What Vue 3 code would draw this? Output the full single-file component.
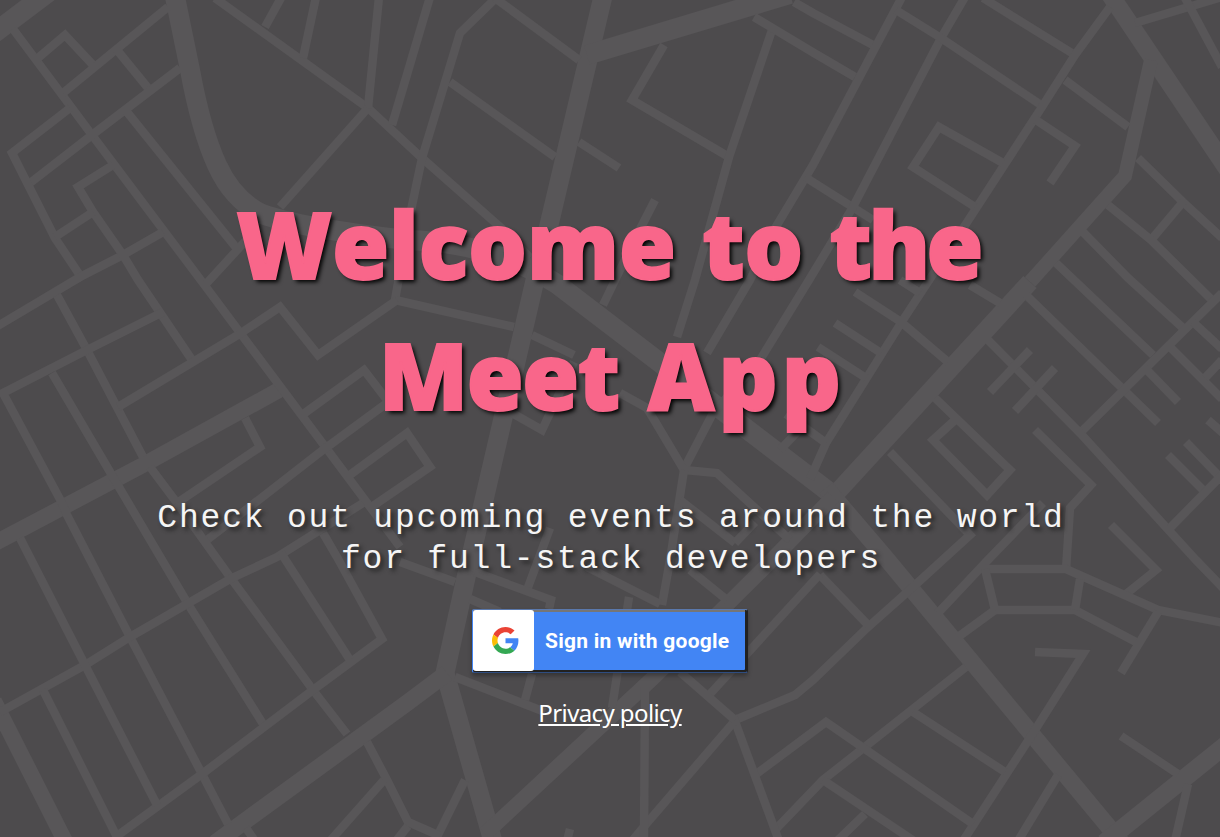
<script setup>
const highways = [
  { w: 20, d: 'M-15 40L50 -9' },
  { w: 20, d: 'M174 -8L190 70Q201 130 217 165Q233 200 262 214Q300 228 407 240Q490 242 557 284L833 495' },
  { w: 19, d: 'M604 -8L549 225L535 280L465 582L445 673L494 845' },
  { w: 20, d: 'M587 55L790 -6' },
  { w: 18, d: 'M1109 -7L1228 170' },
  { w: 14, d: 'M1151 60L1125 176L1030 282' },
  { w: 18, d: 'M1030 282L830 500' },
  { w: 17, d: 'M826 488L885 557L1122 843' },
  { w: 15, d: 'M833 497L765 567L654 677L485 834' },
  { w: 16, d: 'M-5 543L143 465L279 390' },
  { w: 16, d: 'M-6 701L68 847' },
  { w: 17, d: 'M215 843L407 703L447 673' },
  { w: 18, d: 'M1104 843L1228 743' },
]

const streets = [
  '13,29 92,135 203,283 400,547', '38,58 65,35 93,65', '168,7 63,93', '117,50 148,88',
  '180,68 92,135 30,183', '70,108 12,153 55,238 83,280', '163,232 123,255 80,277 -4,327',
  '113,165 78,187 93,212 123,255 138,280 192,360', '93,212 55,237', '127,112 238,250',
  '250,236 206,284', '215,-2 368,108 422,158 507,233 530,258', '281,-2 265,27', '316,-3 303,58',
  '379,-3 368,108', '430,-3 392,125', '368,108 280,207', '496,-2 460,33 422,158 410,215 395,300',
  '495,-2 579,60', '450,82 555,157', '579,142 619,168', '664,45 632,100 729,157',
  '772,30 729,157 695,280 677,337', '754,17 814,53 855,77', '794,2 813,13 873,45',
  '655,200 637,235 603,305', '902,-3 813,165 774,230 750,280 707,353', '805,177 873,220',
  '965,-3 941,38 853,207 809,280 760,360 713,413 685,467', '896,10 941,38 1041,105',
  '983,-2 1075,55', '1110,7 1075,55 1040,110 962,230 901,323 826,443 810,479',
  '1065,80 1128,127', '1003,163 939,127 913,167 975,207', '1036,120 1075,146 1050,183',
  '1135,23 1222,-3', '1184,-4 1222,67', '1138,158 1183,202 1222,238', '1183,202 1151,240',
  '1108,205 1151,240 1211,299', '1083,232 1128,278 1183,328', '1056,263 1153,355',
  '1026,295 1158,423', '1222,293 1080,433', '1193,322 1222,349', '1168,345 1222,399',
  '1222,360 1205,378', '1145,368 1178,402', '988,340 1080,433 1196,560 1224,589',
  '1030,350 990,392', '1055,368 1015,411', '970,285 1000,303', '855,292 901,322 948,362',
  '835,323 881,353', '818,347 866,378', '900,280 920,293', '786,414 826,443',
  '935,398 1010,470 987,495 933,440 955,420', '1035,430 1091,485 1070,508 1066,570',
  '890,452 970,535 913,587 868,627 813,680 795,695 735,720', '1043,503 986,562 938,613',
  '1111,525 1156,570 1126,594', '1208,420 1224,434', '1186,442 1218,475', '1168,455 1205,492',
  '1224,473 1170,528', '985,569 1066,569 1158,610 1224,623', '985,569 995,610 1075,610 1136,642',
  '958,637 995,610', '1080,579 1075,610', '1158,612 1121,673', '1035,652 1083,654 1035,730 963,841',
  '1121,736 1178,774', '1188,784 1175,841', '966,667 823,780 775,830', '913,712 1005,772',
  '755,775 826,722 973,824', '733,716 779,841', '733,723 647,823 632,841', '823,780 914,841',
  '865,814 837,841', '1058,775 1018,841', '820,575 868,625', '820,574 710,694',
  '395,300 514,327', '532,335 574,355', '512,413 542,430 574,362', '620,393 647,408 684,470 717,473 790,540',
  '684,470 670,560 662,605', '587,567 660,604', '629,597 612,708', '680,500 735,543',
  '690,570 727,600', '801,428 780,450', '735,543 755,522', '550,528 527,590', '475,572 551,600 549,609',
  '400,562 455,582', '470,599 500,612', '455,677 545,712', '532,674 525,700', '645,687 644,841',
  '680,672 735,720', '465,780 435,841', '367,742 387,780 408,822 440,836', '384,780 330,841',
  '408,826 396,841', '570,829 567,841', '246,828 255,841', '57,295 87,350 143,457',
  '150,467 177,503 260,447 245,418', '163,312 87,350 3,393 62,503 67,515 130,637 202,774 228,824',
  '52,373 113,477 188,604 263,724', '118,407 238,335 280,307 318,355 397,300', '302,415 364,370 390,404',
  '387,403 323,450 207,540', '177,503 230,577 313,690 347,734', '347,477 407,433 430,467 370,508',
  '363,503 277,557 230,579 130,637 85,665 0,712', '323,533 337,557 382,639 313,690 202,774 117,836',
  '281,553 350,660', '20,538 85,665 157,805', '43,690 119,841',
]
</script>

<template>
  <main class="welcome">
    <svg class="map" viewBox="0 0 1220 837" preserveAspectRatio="xMidYMid slice" aria-hidden="true">
      <path v-for="(h, i) in highways" :key="'h' + i" :d="h.d" :stroke-width="h.w" />
      <polyline v-for="(s, i) in streets" :key="'s' + i" :points="s" stroke-width="8.5" />
    </svg>
    <h1>Welcome to <span class="the">the</span><br /><span class="meet">Meet</span> <span class="app">App</span></h1>
    <h4>Check out upcoming events around the world<br />for full-stack developers</h4>
    <button class="google">
      <span class="logo">
        <svg viewBox="0 0 48 48" aria-hidden="true">
          <path fill="#EA4335" d="M24 9.5c3.54 0 6.71 1.22 9.21 3.6l6.85-6.85C35.9 2.38 30.47 0 24 0 14.62 0 6.51 5.38 2.56 13.22l7.98 6.19C12.43 13.72 17.74 9.5 24 9.5z" />
          <path fill="#4285F4" d="M46.98 24.55c0-1.57-.15-3.09-.38-4.55H24v9.02h12.94c-.58 2.96-2.26 5.48-4.78 7.18l7.73 6c4.51-4.18 7.09-10.36 7.09-17.65z" />
          <path fill="#FBBC05" d="M10.53 28.59c-.48-1.45-.76-2.99-.76-4.59s.27-3.14.76-4.59l-7.98-6.19C.92 16.46 0 20.12 0 24c0 3.88.92 7.54 2.56 10.78l7.97-6.19z" />
          <path fill="#34A853" d="M24 48c6.48 0 11.93-2.13 15.89-5.81l-7.73-6c-2.15 1.45-4.92 2.3-8.16 2.3-6.26 0-11.57-4.22-13.47-9.91l-7.98 6.19C6.51 42.62 14.62 48 24 48z" />
        </svg>
      </span>
      <span class="label">Sign in with google</span>
    </button>
    <a class="privacy" href="#">Privacy policy</a>
  </main>
</template>

<style>
body { margin: 0; background: #4d4b4d; }
</style>

<style scoped>
.welcome {
  position: relative;
  display: flex;
  flex-direction: column;
  align-items: center;
  height: 837px;
  overflow: hidden;
  background: #4d4b4d;
  color: #fff;
  text-align: center;
}
.map {
  position: absolute;
  inset: 0;
  width: 100%;
  height: 100%;
  fill: none;
  stroke: #585658;
}
h1, h4, .google, .privacy { position: relative; }
h1 {
  margin: 178px 0 0;
  font: 800 92px/131px "Open Sans", "Noto Sans", sans-serif;
  word-spacing: 2.5px;
  color: #f9668a;
  white-space: nowrap;
  -webkit-text-stroke: 2px #f9668a;
  text-shadow: 3px 3px 4px #000;
}
.the { letter-spacing: -3.5px; margin-right: 3.5px; }
.meet { letter-spacing: -1.3px; margin-right: 2.5px; }
.app { letter-spacing: 4px; margin-right: -4px; }
h4 {
  margin: 58px 0 0 2px;
  font: 400 33px/41px "Liberation Mono", monospace;
  letter-spacing: 1.8px;
  color: #f5f5f5;
  white-space: nowrap;
  text-shadow: 3px 3px 4px #222;
}
.google {
  display: flex;
  align-items: center;
  box-sizing: border-box;
  width: 276px;
  height: 64px;
  margin: 29px 0 0;
  padding: 0 0 1px;
  border: 1px solid;
  border-color: #5a78ac #212121 #2f4d80 #4285f4;
  border-radius: 2px;
  background: #4285f4;
  box-shadow: inset -2px -2px 0 #212121, inset 0 2px 0 #767676, 0 3px 4px rgba(0, 0, 0, 0.3);
  color: #fff;
}
.logo {
  display: flex;
  align-items: center;
  justify-content: center;
  flex: none;
  width: 61px;
  height: 61px;
  border-radius: 3px;
  background: #fff;
}
.logo svg { width: 27px; height: 27px; margin-left: 3px; }
.label {
  margin-left: 11px;
  font: 700 21px/24px Roboto, sans-serif;
  letter-spacing: 0.25px;
  white-space: nowrap;
}
.privacy {
  margin-top: 24px;
  font: 400 24px/32px "Noto Sans", sans-serif;
  letter-spacing: -0.6px;
  color: #fff;
}
</style>
